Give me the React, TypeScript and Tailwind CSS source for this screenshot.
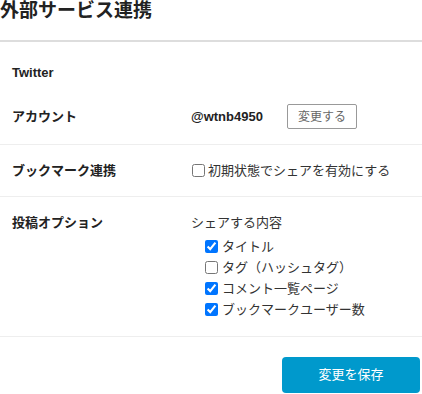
import React, { useState } from 'react';

const font = { fontFamily: '"Liberation Sans", "Noto Sans CJK JP", sans-serif' };

type Item = { label: string; checked: boolean };

const initialItems: Item[] = [
  { label: 'タイトル', checked: true },
  { label: 'タグ（ハッシュタグ）', checked: false },
  { label: 'コメント一覧ページ', checked: true },
  { label: 'ブックマークユーザー数', checked: true },
];

const App: React.FC = () => {
  const [items, setItems] = useState<Item[]>(initialItems);
  const [shareDefault, setShareDefault] = useState(false);

  const toggle = (i: number) =>
    setItems(prev => prev.map((it, idx) => (idx === i ? { ...it, checked: !it.checked } : it)));

  return (
    <div className="w-[422px] h-[394px] bg-white text-[#333] text-[13px]" style={font}>
      <h1 className="text-[19px] leading-[21px] font-bold text-[#222] pb-[19px] border-b-2 border-[#dddddd]">
        外部サービス連携
      </h1>

      <h2 className="px-3 pt-5 pb-[6px] leading-[21px] font-bold text-[#222]">Twitter</h2>

      <div className="grid grid-cols-[179px_1fr] items-center px-3 py-[15px] border-b border-[#eeeeee]">
        <div className="font-bold text-[#222] leading-[21px]">アカウント</div>
        <div className="flex items-center">
          <span className="font-bold text-[#222]">@wtnb4950</span>
          <button className="ml-6 h-[25px] px-[10px] text-[12px] text-[#666] border border-[#999] rounded-[2px] bg-white">
            変更する
          </button>
        </div>
      </div>

      <div className="grid grid-cols-[179px_1fr] items-center px-3 py-[15px] border-b border-[#eeeeee] leading-[21px]">
        <div className="font-bold text-[#222]">ブックマーク連携</div>
        <label className="flex items-center">
          <input
            type="checkbox"
            className="ml-[1px] mr-[3px] w-[13px] h-[13px]"
            checked={shareDefault}
            onChange={() => setShareDefault(v => !v)}
          />
          初期状態でシェアを有効にする
        </label>
      </div>

      <div className="grid grid-cols-[179px_1fr] items-start px-3 pt-[15px] pb-[16px] border-b border-[#eeeeee] leading-[21px]">
        <div className="font-bold text-[#222]">投稿オプション</div>
        <div>
          <div>シェアする内容</div>
          <ul className="pl-[14px] mt-[3px]">
            {items.map((it, i) => (
              <li key={it.label}>
                <label className="flex items-center">
                  <input
                    type="checkbox"
                    className="mr-[4px] w-[13px] h-[13px]"
                    checked={it.checked}
                    onChange={() => toggle(i)}
                  />
                  {it.label}
                </label>
              </li>
            ))}
          </ul>
        </div>
      </div>

      <div className="flex justify-end pt-5 pr-[2px]">
        <button className="w-[138px] h-[36px] bg-[#0099cc] text-white text-[13px] rounded-[4px]">
          変更を保存
        </button>
      </div>
    </div>
  );
};

export default App;
